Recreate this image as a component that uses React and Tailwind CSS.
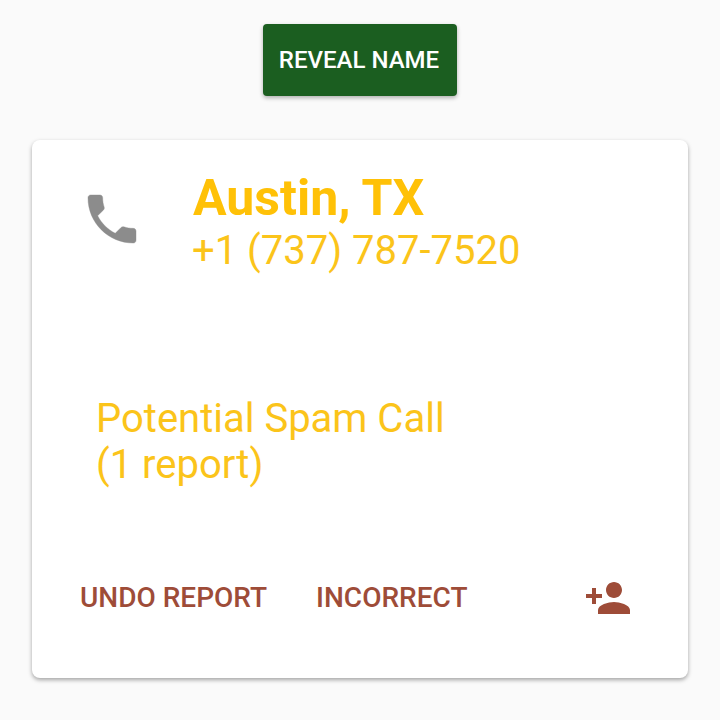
const PhoneIcon = () => (
  <svg viewBox="0 0 24 24" className="w-16 h-16 shrink-0 fill-[#8c8c8c] stroke-[#8c8c8c] stroke-[0.15px]">
    <path d="M6.62 10.79c1.44 2.83 3.76 5.14 6.59 6.59l2.2-2.2c.27-.27.67-.36 1.02-.24 1.12.37 2.33.57 3.57.57.55 0 1 .45 1 1V20c0 .55-.45 1-1 1-9.39 0-17-7.61-17-17 0-.55.45-1 1-1h3.5c.55 0 1 .45 1 1 0 1.25.2 2.45.57 3.57.11.35.03.74-.25 1.02l-2.2 2.2z" />
  </svg>
);

const PersonAddIcon = () => (
  <svg viewBox="0 0 24 24" className="w-12 h-12 shrink-0 fill-[#9e4c38]">
    <path d="M15 12c2.21 0 4-1.79 4-4s-1.79-4-4-4-4 1.79-4 4 1.79 4 4 4zm-9-2V7H4v3H1v2h3v3h2v-3h3v-2H6zm9 4c-2.67 0-8 1.34-8 4v2h16v-2c0-2.66-5.33-4-8-4z" />
  </svg>
);

const App = () => {
  return (
    <div className="w-[720px] h-[720px] overflow-hidden bg-[#fafafa] flex flex-col items-center pt-6 font-['Roboto',sans-serif]">
      {/* Reveal button */}
      <button className="w-[194px] h-[72px] pr-[2px] rounded bg-[#1b5e20] text-white text-[24px] font-medium shadow-[0_2px_4px_rgba(0,0,0,0.3)]">
        REVEAL NAME
      </button>

      {/* Call card */}
      <div className="w-[656px] h-[538px] mt-11 rounded-lg bg-white shadow-[0_2px_4px_rgba(0,0,0,0.35)] flex flex-col">
        <div className="flex pl-12 pt-[47px]">
          <PhoneIcon />
          <div className="ml-12 -mt-[18px]">
            <div className="pl-px text-[50px] leading-[58px] font-bold text-[#ffc107]">Austin, TX</div>
            <div className="text-[40px] leading-[47px] text-[#fbc41a]">+1 (737) 787-7520</div>
          </div>
        </div>

        <div className="pl-[64px] mt-[122px] text-[40px] leading-[46px] text-[#fbc41a]">
          Potential Spam Call
          <br />
          (1 report)
        </div>

        <div className="flex items-center pl-12 mt-[86px] text-[28px] leading-[48px] font-medium text-[#9e4c38]">
          <span>UNDO REPORT</span>
          <span className="ml-[49px]">INCORRECT</span>
          <div className="ml-[117px]">
            <PersonAddIcon />
          </div>
        </div>
      </div>
    </div>
  );
};

export default App;
